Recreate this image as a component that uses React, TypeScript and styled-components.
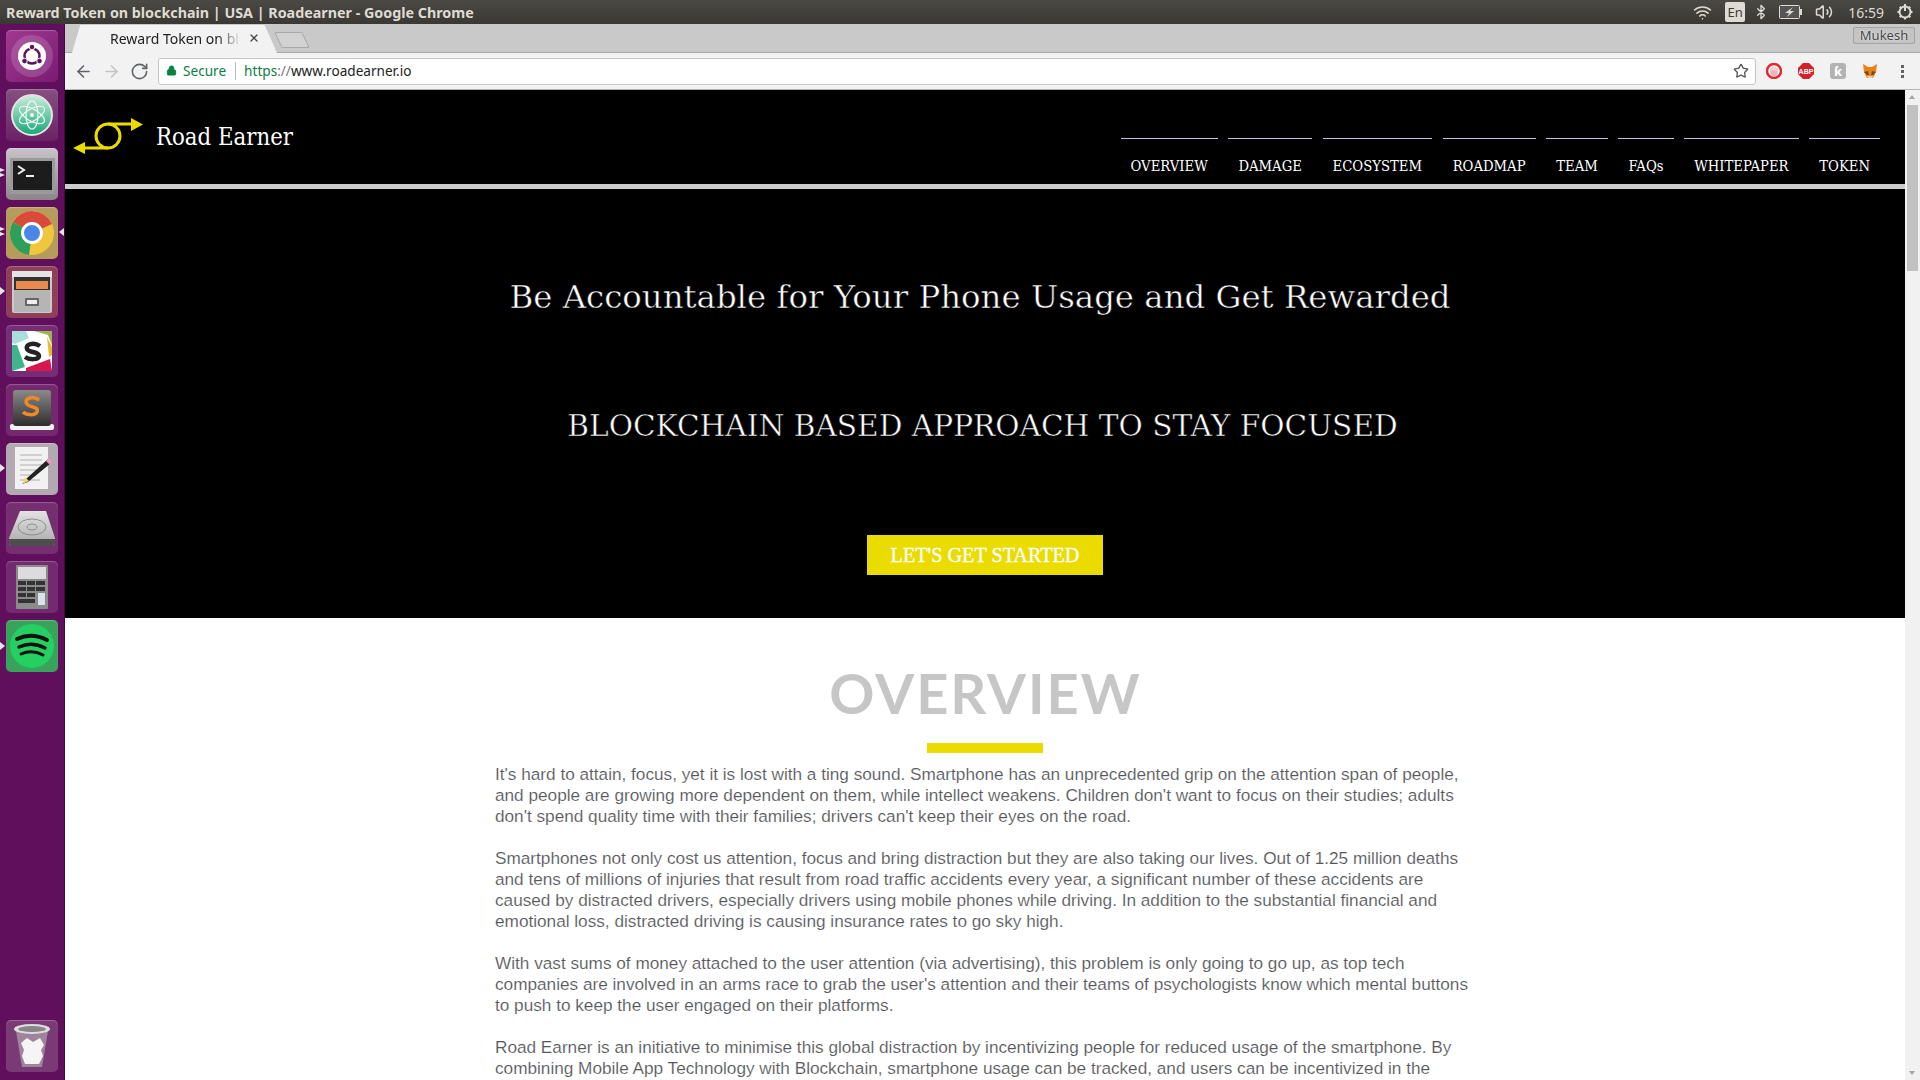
import React from 'react';
import styled, { createGlobalStyle } from 'styled-components';
import { ArrowLeft, ArrowRight, RotateCw, Star, Lock, X, Bluetooth, Volume2, Wifi } from 'lucide-react';

const Global = createGlobalStyle`
  html, body { margin: 0; padding: 0; height: 1080px; overflow: hidden; background: #fff; }
  #root { height: 1080px; }
  * { box-sizing: border-box; }
`;

const Desktop = styled.div`
  width: 1920px;
  height: 1080px;
  display: flex;
  flex-direction: column;
  overflow: hidden;
  font-family: 'Noto Sans', 'DejaVu Sans', sans-serif;
`;

const TopBar = styled.div`
  height: 24px;
  flex: none;
  background: linear-gradient(#4a4943, #393834);
  display: flex;
  align-items: center;
  padding: 0 6px 0 6px;
  color: #dfdbd2;
  font-size: 14.3px;
  font-weight: 700;
`;

const WindowTitle = styled.div`
  flex: 1;
  white-space: nowrap;
`;

const Tray = styled.div`
  display: flex;
  align-items: center;
  color: #dfdbd2;
  font-weight: 400;
  font-size: 14px;
`;

const LangBadge = styled.span`
  width: 20px;
  height: 20px;
  margin: 0 8px 0 13px;
  background: #e0dcd3;
  color: #3c3b37;
  border-radius: 2px;
  font-size: 13px;
  display: flex;
  align-items: center;
  justify-content: center;
`;

const Clock = styled.span`
  margin: 0 12px 0 15px;
`;

const Battery = styled.svg`
  margin: 0 12px 0 10px;
`;

const Body = styled.div`
  flex: 1;
  display: flex;
  min-height: 0;
`;

const Launcher = styled.div`
  width: 65px;
  flex: none;
  background: #600f5c;
  border-right: 1px solid #3f0a3c;
  display: flex;
  flex-direction: column;
  padding: 6px 0 0 6px;
  gap: 7px;
  position: relative;
`;

const Tile = styled.div<{ $bg: string; $push?: boolean }>`
  width: 52px;
  height: 52px;
  flex: none;
  border-radius: 5px;
  background: ${(p) => p.$bg};
  display: flex;
  align-items: center;
  justify-content: center;
  margin-top: ${(p) => (p.$push ? 'auto' : '0')};
  margin-bottom: ${(p) => (p.$push ? '8px' : '0')};
  box-shadow: inset 0 1px 1px rgba(255, 255, 255, 0.25);
`;

const Pip = styled.span<{ $top: number; $small?: boolean }>`
  position: absolute;
  left: 0;
  top: ${(p) => p.$top}px;
  width: 0;
  height: 0;
  border-top: ${(p) => (p.$small ? 2 : 4)}px solid transparent;
  border-bottom: ${(p) => (p.$small ? 2 : 4)}px solid transparent;
  border-left: 5px solid #e6e6e6;
`;

const ActivePip = styled.span`
  position: absolute;
  left: 59px;
  top: 204px;
  width: 0;
  height: 0;
  border-top: 4px solid transparent;
  border-bottom: 4px solid transparent;
  border-right: 5px solid #e6e6e6;
`;

const Browser = styled.div`
  flex: 1;
  min-width: 0;
  display: flex;
  flex-direction: column;
`;

const TabStrip = styled.div`
  height: 29px;
  flex: none;
  background: #c9c9c9;
  box-shadow: inset 0 -1px #a9a9a9;
  display: flex;
  align-items: flex-end;
  padding-left: 7px;
  position: relative;
`;

const Tab = styled.div`
  width: 205px;
  height: 28px;
  background: #f2f2f2;
  clip-path: polygon(0 100%, 4% 0, 94% 0, 100% 100%);
  display: flex;
  align-items: center;
  padding: 0 17px 2px 38px;
  font-size: 14px;
  color: #222;
`;

const TabTitle = styled.span`
  flex: 1;
  overflow: hidden;
  white-space: nowrap;
  margin-right: 7px;
  -webkit-mask-image: linear-gradient(90deg, #000 82%, transparent);
  mask-image: linear-gradient(90deg, #000 82%, transparent);
`;

const NewTab = styled.div`
  width: 28px;
  height: 16px;
  margin: 0 0 5px 1px;
  background: #d2d2d2;
  border: 1px solid #a8a8a8;
  border-radius: 2px;
  transform: skewX(25deg);
`;

const UserChip = styled.div`
  position: absolute;
  right: 5px;
  top: 3px;
  width: 62px;
  height: 17px;
  border: 1px solid #a5a5a5;
  border-radius: 2px;
  background: #c4c4c4;
  color: #444;
  font-size: 13px;
  text-align: center;
  line-height: 15px;
  text-shadow: 0 0 2px #fff;
`;

const Toolbar = styled.div`
  height: 37px;
  flex: none;
  background: #f2f2f2;
  border-bottom: 1px solid #b5b5b5;
  display: flex;
  align-items: center;
  padding: 0 0 0 9px;
`;

const NavIcons = styled.div`
  display: flex;
  gap: 9px;
  color: #5f6368;
  margin-right: 9px;
`;

const Omnibox = styled.div`
  width: 1598px;
  height: 27px;
  background: #fff;
  border: 1px solid #c6c6c6;
  border-radius: 3px;
  display: flex;
  align-items: center;
  padding: 0 6px 1px 7px;
  font-size: 13.6px;
  color: #222;
`;

const Secure = styled.span`
  color: #0b8043;
  display: flex;
  align-items: center;
  gap: 6px;
  padding-right: 9px;
  margin-right: 8px;
  border-right: 1px solid #bbb;
  line-height: 18px;
`;

const Scheme = styled.span`
  color: #0b8043;
`;

const Muted = styled.span`
  color: #777;
`;

const Url = styled.span`
  flex: 1;
`;

const Extensions = styled.div`
  display: flex;
  align-items: center;
  gap: 16px;
  margin-left: 10px;
`;

const Ext = styled.span<{ $bg: string }>`
  width: 16px;
  height: 16px;
  background: ${(p) => p.$bg};
  color: #fff;
  border-radius: 3px;
  display: flex;
  align-items: center;
  justify-content: center;
  font-size: 13px;
  font-weight: 700;
`;

const Dots = styled.span`
  width: 3px;
  height: 15px;
  margin-left: 7px;
  background: radial-gradient(circle, #5f6368 1.5px, transparent 1.6px) 0 0 / 3px 5px;
`;

const Viewport = styled.div`
  flex: 1;
  min-height: 0;
  display: flex;
`;

const Page = styled.div`
  flex: 1;
  min-width: 0;
  overflow: hidden;
  background: #fff;
`;

const Scrollbar = styled.div`
  width: 15px;
  flex: none;
  background: #f1f1f1;
  position: relative;
`;

const Thumb = styled.div`
  position: absolute;
  left: 2px;
  right: 2px;
  top: 15px;
  height: 166px;
  background: #c1c1c1;
`;

const ScrollArrow = styled.span<{ $down?: boolean }>`
  position: absolute;
  left: 4px;
  ${(p) => (p.$down ? 'bottom: 5px;' : 'top: 5px;')}
  width: 0;
  height: 0;
  border-left: 3.5px solid transparent;
  border-right: 3.5px solid transparent;
  ${(p) => (p.$down ? 'border-top: 4px solid #a3a3a3;' : 'border-bottom: 4px solid #a3a3a3;')}
`;

const Header = styled.header`
  height: 99px;
  background: #000;
  border-bottom: 5px solid #ccc;
  display: flex;
  justify-content: space-between;
  padding: 0 25px 0 8px;
`;

const Brand = styled.div`
  display: flex;
  align-items: center;
  gap: 12px;
  height: 94px;
  color: #fff;
  font-family: 'DejaVu Serif Condensed', 'DejaVu Serif', serif;
  font-size: 23.7px;
`;

const Nav = styled.nav`
  display: flex;
  gap: 10.7px;
  padding-top: 48px;
`;

const NavItem = styled.a`
  border-top: 1px solid #b9c4dc;
  padding: 17px 10px 0;
  height: 46px;
  line-height: 20px;
  color: #fff;
  font-family: 'DejaVu Serif Condensed', 'DejaVu Serif', serif;
  font-size: 14.7px;
  white-space: nowrap;
`;

const Hero = styled.section`
  height: 429px;
  background: #000;
  display: flex;
  flex-direction: column;
  align-items: center;
  padding-top: 88px;
`;

const HeroTitle = styled.h1`
  margin: 0;
  padding-right: 10px;
  font-family: 'DejaVu Serif', serif;
  font-weight: 400;
  font-size: 32.4px;
  line-height: 40px;
  color: #fff;
  -webkit-text-stroke: 0.5px #000;
  white-space: nowrap;
`;

const HeroSub = styled(HeroTitle)`
  margin-top: 89px;
  padding-right: 5px;
  font-size: 29.6px;
`;

const Cta = styled.button`
  margin-top: 89px;
  width: 236px;
  height: 40px;
  border: 0;
  background: #ebdc00;
  color: #fff;
  font-family: 'Liberation Serif', serif;
  font-size: 20.2px;
  font-weight: 400;
  -webkit-text-stroke: 0.3px #fff;
`;

const Content = styled.section`
  width: 980px;
  margin: 0 auto;
  text-align: center;
`;

const SectionTitle = styled.h2`
  margin: 39px 0 0;
  padding-left: 1px;
  font-family: 'Lato', 'Noto Sans', sans-serif;
  font-weight: 700;
  font-size: 56px;
  line-height: 72px;
  letter-spacing: 2px;
  color: #c6c6c6;
`;

const Rule = styled.div`
  width: 116px;
  height: 10px;
  margin: 14px auto 11px;
  background: #ebdc00;
`;

const Para = styled.p`
  margin: 0 0 21px;
  text-align: left;
  white-space: nowrap;
  font-family: 'Liberation Sans', Arial, sans-serif;
  font-size: 17.2px;
  line-height: 21px;
  color: #55565a;
  -webkit-text-stroke: 0.15px #fff;
`;

const TrackLogo = () => (
  <svg width="71" height="40" viewBox="0 0 71 40" fill="none">
    <path d="M10 31 H35 M35 7 H60" stroke="#ebdc00" strokeWidth="3" />
    <circle cx="35" cy="19" r="12" stroke="#ebdc00" strokeWidth="3" />
    <path d="M0 31 L12 25 V37 Z M70 7.500 L58 1 V14 Z" fill="#ebdc00" />
  </svg>
);

const SessionIcon = () => (
  <svg width="18" height="18" viewBox="0 0 18 18" fill="none" stroke="#dfdbd2">
    <circle cx="9" cy="9" r="5.500" strokeWidth="2" />
    <path d="M1.500 9 H3.500 M14.500 9 H16.500 M9 14.500 V16.500 M3.700 3.700 L5 5 M13 13 L14.300 14.300 M3.700 14.300 L5 13 M13 5 L14.300 3.700" strokeWidth="2" />
    <path d="M9 1 V8" strokeWidth="2" />
  </svg>
);

const FoxIcon = () => (
  <svg width="16" height="16" viewBox="0 0 16 16">
    <path d="M1 1 L6 4 H10 L15 1 L14 9 L11 15 H5 L2 9 Z" fill="#e8821e" />
    <path d="M2 9 L6 8 L7 12 H5 Z M14 9 L10 8 L9 12 H11 Z" fill="#7a4a1c" />
    <path d="M5 13 H11 L10 15 H6 Z" fill="#e4cdb4" />
  </svg>
);

const navItems = ['OVERVIEW', 'DAMAGE', 'ECOSYSTEM', 'ROADMAP', 'TEAM', 'FAQs', 'WHITEPAPER', 'TOKEN'];

export default function App() {
  return (
    <Desktop>
      <Global />
      <TopBar>
        <WindowTitle>Reward Token on blockchain | USA | Roadearner - Google Chrome</WindowTitle>
        <Tray>
          <Wifi size={19} />
          <LangBadge>En</LangBadge>
          <Bluetooth size={16} />
          <Battery width="24" height="14" viewBox="0 0 24 14">
            <rect x="0.500" y="0.500" width="20" height="13" rx="1" fill="#555" stroke="#dfdbd2" />
            <rect x="21" y="4" width="2" height="6" fill="#dfdbd2" />
            <path d="M14 2 L6 8 H10 L8 12 L15 6 H11 Z" fill="#dfdbd2" />
          </Battery>
          <Volume2 size={18} />
          <Clock>16:59</Clock>
          <SessionIcon />
        </Tray>
      </TopBar>
      <Body>
        <Launcher>
          <Pip $top={144} $small />
          <Pip $top={149} $small />
          <Pip $top={203} $small />
          <Pip $top={208} $small />
          <Pip $top={263} />
          <Pip $top={440} />
          <Pip $top={618} />
          <ActivePip />
          <Tile $bg="linear-gradient(135deg,#a03a90,#7a1a72)">
            <svg width="44" height="44" viewBox="0 0 44 44">
              <circle cx="22" cy="22" r="21" fill="#fff" opacity="0.16" />
              <circle cx="22" cy="22" r="14" fill="#fff" />
              <circle cx="22" cy="22" r="7.500" fill="none" stroke="#5c1458" strokeWidth="2.500" />
              <circle cx="22" cy="13" r="2.800" fill="#5c1458" stroke="#fff" />
              <circle cx="14.500" cy="27" r="2.800" fill="#5c1458" stroke="#fff" />
              <circle cx="29.500" cy="27" r="2.800" fill="#5c1458" stroke="#fff" />
            </svg>
          </Tile>
          <Tile $bg="linear-gradient(#86507f,#6a2265)">
            <svg width="42" height="42" viewBox="0 0 42 42" fill="none">
              <defs>
                <linearGradient id="atomFill" x1="0" y1="0" x2="0" y2="1">
                  <stop offset="0" stopColor="#cdeedd" />
                  <stop offset="1" stopColor="#14a676" />
                </linearGradient>
              </defs>
              <circle cx="21" cy="21" r="20" fill="url(#atomFill)" stroke="#e4e4e4" strokeWidth="2" />
              <ellipse cx="21" cy="21" rx="14" ry="6" stroke="#f2fbf6" strokeWidth="1.200" transform="rotate(30 21 21)" />
              <ellipse cx="21" cy="21" rx="14" ry="6" stroke="#f2fbf6" strokeWidth="1.200" transform="rotate(-30 21 21)" />
              <ellipse cx="21" cy="21" rx="14" ry="6" stroke="#f2fbf6" strokeWidth="1.200" transform="rotate(90 21 21)" />
              <circle cx="21" cy="21" r="2" fill="#f2fbf6" />
            </svg>
          </Tile>
          <Tile $bg="linear-gradient(#c9c3c9,#8d8589)">
            <svg width="45" height="40" viewBox="0 0 45 40">
              <rect x="0" y="4" width="45" height="36" rx="1" fill="#9a9a9a" />
              <rect x="3" y="7" width="39" height="29" fill="#1c1c1c" />
              <path d="M8 12 L14 16 L8 20" fill="none" stroke="#eee" strokeWidth="2" />
              <rect x="16" y="21" width="8" height="2" fill="#eee" />
            </svg>
          </Tile>
          <Tile $bg="#b59c5c">
            <svg width="46" height="46" viewBox="0 0 46 46">
              <circle cx="23" cy="23" r="22" fill="#f0c63c" />
              <path d="M23 23 L4 12 A22 22 0 0 1 43 14 Z" fill="#d94a3d" />
              <path d="M23 23 L4 12 A22 22 0 0 0 20 45 Z" fill="#2e9f5a" />
              <circle cx="23" cy="23" r="9.500" fill="#4a86e8" stroke="#fff" strokeWidth="3" />
            </svg>
          </Tile>
          <Tile $bg="#8f3f5a">
            <svg width="42" height="44" viewBox="0 0 42 44">
              <rect x="1" y="1" width="40" height="42" rx="2" fill="#c9c9c9" />
              <rect x="1" y="1" width="40" height="6" fill="#e4e4e4" />
              <rect x="3" y="7" width="36" height="13" fill="#333" />
              <rect x="5" y="11" width="32" height="8" fill="#e88a4a" />
              <rect x="3" y="20" width="36" height="22" fill="#b5b5b5" />
              <rect x="14" y="28" width="14" height="8" rx="1" fill="#666" />
              <rect x="16" y="30" width="10" height="4" fill="#eee" />
            </svg>
          </Tile>
          <Tile $bg="#772c78">
            <svg width="40" height="40" viewBox="0 0 40 40">
              <rect x="0" y="0" width="40" height="40" rx="2" fill="#fff" />
              <path d="M0 0 H14 L17 7 L3 13 L0 12 Z" fill="#a9dedb" />
              <path d="M22 0 H40 V14 L36 4 Z" fill="#9cb34f" />
              <path d="M35 6 L40 16 V24 L37 26 Z" fill="#e8b92f" />
              <path d="M0 14 L5 14 L13 36 L0 40 Z" fill="#3fb58f" />
              <path d="M14 37 L38 28 L40 40 H14 Z" fill="#d8174f" />
              <path d="M28 15 C22 11 13 13 15 18 C17 22 27 20 27 25 C27 29 17 29 13 26" fill="none" stroke="#222" strokeWidth="4.500" />
            </svg>
          </Tile>
          <Tile $bg="#74296f">
            <svg width="44" height="42" viewBox="0 0 44 42">
              <defs>
                <linearGradient id="sublimeBody" x1="0" y1="0" x2="0" y2="1">
                  <stop offset="0" stopColor="#8a8a8a" />
                  <stop offset="1" stopColor="#2e2e2e" />
                </linearGradient>
              </defs>
              <rect x="0" y="35" width="44" height="6" rx="2" fill="#f2f2f2" />
              <rect x="3" y="1" width="38" height="36" rx="3" fill="url(#sublimeBody)" />
              <path d="M29 11 C22 6 13 10 17 15 C20 19 29 17 27 23 C25 27 16 26 13 23" fill="none" stroke="#f08a24" strokeWidth="3.500" />
            </svg>
          </Tile>
          <Tile $bg="#b3a9b1">
            <svg width="40" height="44" viewBox="0 0 40 44">
              <rect x="3" y="0" width="33" height="42" fill="#f1f1f1" />
              <path d="M8 8 H30 M8 13 H30 M8 18 H30 M8 23 H24 M8 28 H18 M8 33 H28" stroke="#b0b0b0" strokeWidth="1" />
              <path d="M36 12 L14 32 L10 37 L16 35 L39 16 Z" fill="#222" />
              <path d="M34 14 L37 10 L40 14 L38 18 Z" fill="#e59ac0" />
              <path d="M10 37 L13 30 L17 34 Z" fill="#ecd77a" />
            </svg>
          </Tile>
          <Tile $bg="#752e70">
            <svg width="46" height="36" viewBox="0 0 46 36">
              <defs>
                <linearGradient id="diskTop" x1="0" y1="0" x2="0" y2="1">
                  <stop offset="0" stopColor="#e2e2e2" />
                  <stop offset="1" stopColor="#a9a9a9" />
                </linearGradient>
              </defs>
              <path d="M11 1 H37 L46 28 V33 Q46 36 43 36 H3 Q0 36 0 33 V28 Z" fill="url(#diskTop)" />
              <ellipse cx="23" cy="17" rx="14" ry="8" fill="none" stroke="#8f8f8f" />
              <ellipse cx="23" cy="17" rx="5" ry="3" fill="none" stroke="#8f8f8f" />
              <path d="M0 29 H46 V33 Q46 36 43 36 H3 Q0 36 0 33 Z" fill="#4e4e4e" />
            </svg>
          </Tile>
          <Tile $bg="#742a70">
            <svg width="34" height="44" viewBox="0 0 34 44">
              <rect x="1" y="0" width="32" height="44" rx="1" fill="#8b8b8b" />
              <rect x="3" y="2" width="28" height="12" fill="#dcdcdc" />
              <path d="M3 16 H11 V20 H3 Z M12 16 H20 V20 H12 Z M21 16 H30 V20 H21 Z M3 22 H11 V26 H3 Z M12 22 H20 V26 H12 Z M21 22 H30 V26 H21 Z M3 28 H11 V32 H3 Z M12 28 H20 V32 H12 Z M3 34 H20 V38 H3 Z" fill="#333" />
              <rect x="23" y="28" width="7" height="12" fill="#d6e3ea" />
            </svg>
          </Tile>
          <Tile $bg="#39a35c">
            <svg width="46" height="46" viewBox="0 0 46 46" fill="none">
              <circle cx="23" cy="23" r="22" fill="#25d062" />
              <path d="M8 16 Q23 9 38 17" stroke="#111" strokeWidth="4" strokeLinecap="round" />
              <path d="M10 24 Q23 18 36 25" stroke="#111" strokeWidth="3.500" strokeLinecap="round" />
              <path d="M12 31 Q23 26 34 32" stroke="#111" strokeWidth="3" strokeLinecap="round" />
            </svg>
          </Tile>
          <Tile $bg="#7a3a75" $push>
            <svg width="38" height="46" viewBox="0 0 38 46">
              <path d="M3 8 L9 44 H29 L35 8 Z" fill="#b9b4b8" opacity="0.6" />
              <ellipse cx="19" cy="6" rx="18" ry="5" fill="#dedede" />
              <ellipse cx="19" cy="6" rx="14" ry="3" fill="#8a8387" />
              <path d="M8 20 L14 15 L20 19 L27 15 L31 22 L28 27 L30 33 L26 41 H12 L9 33 L11 27 Z" fill="#f5f5f5" />
            </svg>
          </Tile>
        </Launcher>
        <Browser>
          <TabStrip>
            <Tab>
              <TabTitle>Reward Token on bl</TabTitle>
              <X size={12} color="#444" strokeWidth={2.500} />
            </Tab>
            <NewTab />
            <UserChip>Mukesh</UserChip>
          </TabStrip>
          <Toolbar>
            <NavIcons>
              <ArrowLeft size={19} />
              <ArrowRight size={19} color="#c4c4c4" />
              <RotateCw size={19} />
            </NavIcons>
            <Omnibox>
              <Secure>
                <Lock size={11} fill="#0b8043" />
                Secure
              </Secure>
              <Url>
                <Scheme>https</Scheme>
                <Muted>://</Muted>www.roadearner.io
              </Url>
              <Star size={16} color="#555" strokeWidth={2} />
            </Omnibox>
            <Extensions>
              <svg width="16" height="16" viewBox="0 0 16 16">
                <circle cx="8" cy="8" r="7" fill="#fff" stroke="#e8272c" strokeWidth="2.500" />
                <path d="M5 8 V5 M7 8 V3.500 M9 8 V3.500 M11 9 V5 M5 8 L5 10 Q6 13 8 13 Q11 13 11 9 Z" fill="#e8b7b7" stroke="#e8b7b7" strokeWidth="1.300" />
              </svg>
              <svg width="16" height="16" viewBox="0 0 16 16">
                <path d="M5 0 H11 L16 5 V11 L11 16 H5 L0 11 V5 Z" fill="#d62028" />
                <text x="8" y="10.500" fontSize="7" fontWeight="700" fontFamily="Liberation Sans, sans-serif" fill="#fff" textAnchor="middle">ABP</text>
              </svg>
              <Ext $bg="#b3b3b3">ƙ</Ext>
              <FoxIcon />
              <Dots />
            </Extensions>
          </Toolbar>
          <Viewport>
            <Page>
              <Header>
                <Brand>
                  <TrackLogo />
                  Road Earner
                </Brand>
                <Nav>
                  {navItems.map((item) => (
                    <NavItem key={item}>{item}</NavItem>
                  ))}
                </Nav>
              </Header>
              <Hero>
                <HeroTitle>Be Accountable for Your Phone Usage and Get Rewarded</HeroTitle>
                <HeroSub>BLOCKCHAIN BASED APPROACH TO STAY FOCUSED</HeroSub>
                <Cta>LET'S GET STARTED</Cta>
              </Hero>
              <Content>
                <SectionTitle>OVERVIEW</SectionTitle>
                <Rule />
                <Para>
                  It's hard to attain, focus, yet it is lost with a ting sound. Smartphone has an unprecedented grip on the attention span of people,<br />
                  and people are growing more dependent on them, while intellect weakens. Children don't want to focus on their studies; adults<br />
                  don't spend quality time with their families; drivers can't keep their eyes on the road.
                </Para>
                <Para>
                  Smartphones not only cost us attention, focus and bring distraction but they are also taking our lives. Out of 1.25 million deaths<br />
                  and tens of millions of injuries that result from road traffic accidents every year, a significant number of these accidents are<br />
                  caused by distracted drivers, especially drivers using mobile phones while driving. In addition to the substantial financial and<br />
                  emotional loss, distracted driving is causing insurance rates to go sky high.
                </Para>
                <Para>
                  With vast sums of money attached to the user attention (via advertising), this problem is only going to go up, as top tech<br />
                  companies are involved in an arms race to grab the user's attention and their teams of psychologists know which mental buttons<br />
                  to push to keep the user engaged on their platforms.
                </Para>
                <Para>
                  Road Earner is an initiative to minimise this global distraction by incentivizing people for reduced usage of the smartphone. By<br />
                  combining Mobile App Technology with Blockchain, smartphone usage can be tracked, and users can be incentivized in the
                </Para>
              </Content>
            </Page>
            <Scrollbar>
              <ScrollArrow />
              <Thumb />
              <ScrollArrow $down />
            </Scrollbar>
          </Viewport>
        </Browser>
      </Body>
    </Desktop>
  );
}
